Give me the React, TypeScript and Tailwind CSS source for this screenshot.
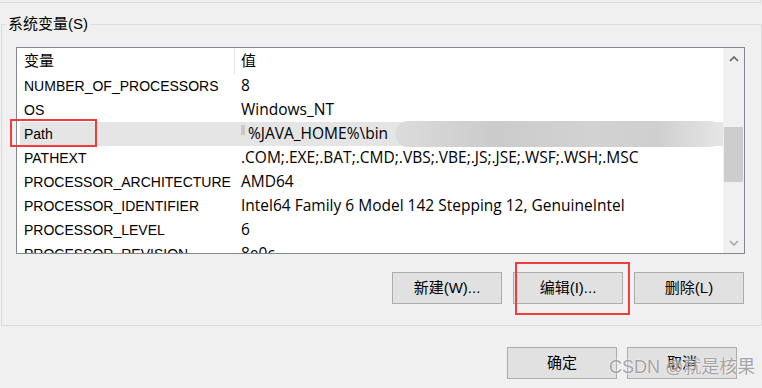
import React from 'react'

const rows = [
  { name: 'NUMBER_OF_PROCESSORS', value: '8' },
  { name: 'OS', value: 'Windows_NT' },
  { name: 'Path', value: '%JAVA_HOME%\\bin', selected: true },
  { name: 'PATHEXT', value: '.COM;.EXE;.BAT;.CMD;.VBS;.VBE;.JS;.JSE;.WSF;.WSH;.MSC' },
  { name: 'PROCESSOR_ARCHITECTURE', value: 'AMD64' },
  { name: 'PROCESSOR_IDENTIFIER', value: 'Intel64 Family 6 Model 142 Stepping 12, GenuineIntel' },
  { name: 'PROCESSOR_LEVEL', value: '6' },
  { name: 'PROCESSOR_REVISION', value: '8e0c' },
]

function Btn({ children }: { children: React.ReactNode }) {
  return (
    <button className="w-[110px] h-[32px] bg-[#e1e1e1] border border-[#adadad] text-[15px] text-black flex items-center justify-center">
      {children}
    </button>
  )
}

export default function App() {
  return (
    <div
      className="relative w-[762px] h-[388px] overflow-hidden bg-[#f0f0f0] text-black"
      style={{ fontFamily: '"Liberation Sans", "Noto Sans CJK SC", sans-serif' }}
    >
      <div className="h-[3px] border-b border-r border-[#dcdcdc] mr-[1px]" />

      {/* 系统变量 group */}
      <div className="relative mt-[21px] ml-[1px] h-[302px] border border-[#dcdcdc] pt-[22px] pl-[14px] pr-[16px]">
        <span className="absolute -top-[11px] left-[4px] bg-[#f0f0f0] px-[2px] text-[15px] leading-[20px]">
          系统变量(S)
        </span>

        <div className="flex h-[207px] border border-[#828790] bg-white">
          <div className="flex-1 overflow-hidden text-[14px]">
            <div className="flex h-[26px] items-center text-[15px]">
              <div className="w-[218px] pl-[7px] border-r border-[#e5e5e5] h-full flex items-center">变量</div>
              <div className="pl-[6px]">值</div>
            </div>
            {rows.map((r) => (
              <div
                key={r.name}
                className={`flex h-[24px] items-center whitespace-nowrap ${r.selected ? 'bg-[#e5e5e5] ml-[3px]' : ''}`}
              >
                <div className={`${r.selected ? 'w-[215px] pl-[4px]' : 'w-[218px] pl-[7px]'}`}>{r.name}</div>
                <div className="pl-[6px] flex items-center font-['Open_Sans'] text-[15.5px]">
                  {r.selected && <span className="inline-block w-[4px] h-[10px] bg-[#c8c8c8] mr-[3px] -mt-[8px]" />}
                  {r.value}
                </div>
              </div>
            ))}
          </div>

          <div className="w-[21px] bg-[#f0f0f0] flex flex-col">
            <div className="h-[21px] flex items-center justify-center">
              <svg width="10" height="6" viewBox="0 0 10 6">
                <path d="M1 5 L5 1 L9 5" stroke="#606060" strokeWidth="1.6" fill="none" />
              </svg>
            </div>
            <div className="flex-1 px-[1px]">
              <div className="mt-[58px] h-[55px] bg-[#cdcdcd]" />
            </div>
            <div className="h-[21px] flex items-center justify-center">
              <svg width="10" height="6" viewBox="0 0 10 6">
                <path d="M1 1 L5 5 L9 1" stroke="#a0a0a0" strokeWidth="1.4" fill="none" />
              </svg>
            </div>
          </div>
        </div>

        <div className="flex justify-end gap-[11px] mt-[18px] pr-[1px]">
          <Btn>新建(W)...</Btn>
          <Btn>编辑(I)...</Btn>
          <Btn>删除(L)</Btn>
        </div>
      </div>

      <div className="flex justify-end gap-[10px] mt-[21px] pr-[25px]">
        <Btn>确定</Btn>
        <Btn>取消</Btn>
      </div>

      {/* blurred value */}
      <div className="absolute left-[395px] top-[121px] w-[328px] h-[26px] rounded-full bg-[linear-gradient(to_right,#dcdcdc,#cbcbcb_30%,#d2d2d2_60%,#cfcfcf_80%,#e6e6e6)]" />

      {/* red highlight boxes */}
      <div className="absolute left-[10px] top-[119px] w-[87px] h-[28px] border-2 border-[#f03c3c]" />
      <div className="absolute left-[515px] top-[262px] w-[115px] h-[53px] border-2 border-[#f03c3c]" />

      {/* watermark */}
      <div
        className="absolute left-[609px] top-[354px] text-[18px] text-[#8f8f8f]/80 whitespace-nowrap"
        style={{ textShadow: '0 0 2px #ffffff' }}
      >
        CSDN @就是核果
      </div>
    </div>
  )
}
